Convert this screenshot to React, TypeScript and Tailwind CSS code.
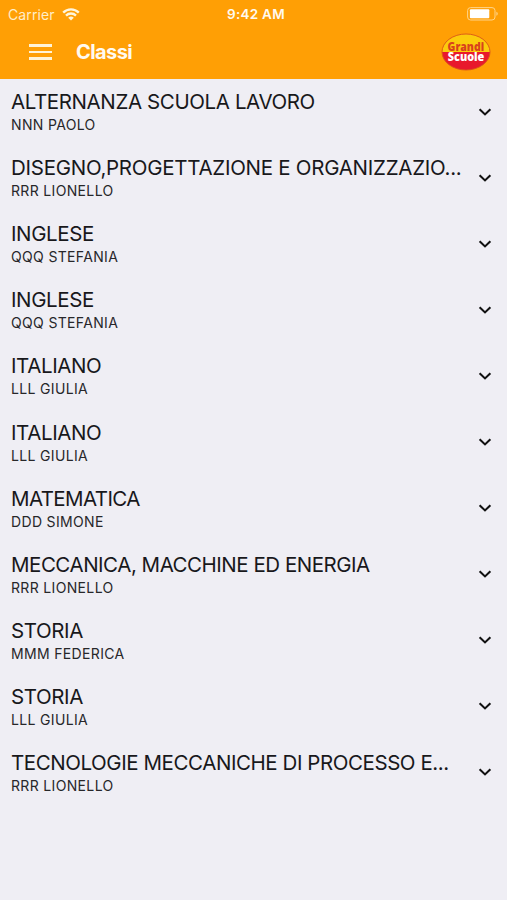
import { useState } from "react";
import clsx from "clsx";

interface Lesson {
  id: number;
  subject: string;
  teacher: string;
  tracking?: string;
}

const lessons: Lesson[] = [
  { id: 1, subject: "ALTERNANZA SCUOLA LAVORO", teacher: "NNN PAOLO" },
  {
    id: 2,
    subject: "DISEGNO,PROGETTAZIONE E ORGANIZZAZIO...",
    teacher: "RRR LIONELLO",
    tracking: "tracking-[-0.27px]",
  },
  { id: 3, subject: "INGLESE", teacher: "QQQ STEFANIA" },
  { id: 4, subject: "INGLESE", teacher: "QQQ STEFANIA" },
  { id: 5, subject: "ITALIANO", teacher: "LLL GIULIA" },
  { id: 6, subject: "ITALIANO", teacher: "LLL GIULIA" },
  { id: 7, subject: "MATEMATICA", teacher: "DDD SIMONE", tracking: "tracking-[-0.6px]" },
  {
    id: 8,
    subject: "MECCANICA, MACCHINE ED ENERGIA",
    teacher: "RRR LIONELLO",
    tracking: "tracking-[-0.48px]",
  },
  { id: 9, subject: "STORIA", teacher: "MMM FEDERICA" },
  { id: 10, subject: "STORIA", teacher: "LLL GIULIA" },
  {
    id: 11,
    subject: "TECNOLOGIE MECCANICHE DI PROCESSO E...",
    teacher: "RRR LIONELLO",
    tracking: "tracking-[-0.43px]",
  },
];

const WifiIcon = () => (
  <svg width="18" height="13" viewBox="0 0 18 13" fill="none" stroke="#fff6dc" strokeWidth="2.3">
    <path d="M1.2 4.6a11 11 0 0 1 15.6 0" />
    <path d="M4 7.6a7 7 0 0 1 10 0" />
    <path d="M6.2 9.8a4 4 0 0 1 5.6 0L9 12.6z" fill="#fff6dc" stroke="none" />
  </svg>
);

const BatteryIcon = () => (
  <svg width="32" height="14" viewBox="0 0 32 14">
    <rect x="0.6" y="0.6" width="27.4" height="12.4" rx="3" fill="none" stroke="#ffd48a" strokeWidth="1" />
    <rect x="2.9" y="2.3" width="19.4" height="9" rx="1" fill="#fff" />
    <path d="M29.4 4.8c1.8.6 1.8 3.4 0 4z" fill="#ffd48a" />
  </svg>
);

const Logo = () => (
  <svg width="50" height="38" viewBox="0 0 50 38">
    <defs>
      <clipPath id="lower-half">
        <rect x="0" y="19" width="50" height="19" />
      </clipPath>
    </defs>
    <ellipse cx="25" cy="19" rx="24" ry="18" fill="#fccb0c" />
    <ellipse cx="25" cy="19" rx="24" ry="18" fill="#e8192c" clipPath="url(#lower-half)" />
    <ellipse cx="25" cy="19" rx="24" ry="18" fill="none" stroke="#d9541a" strokeWidth="0.9" />
    <g fontFamily="'Open Sans', sans-serif" fontWeight="800" fontSize="11.6">
      <text x="6.6" y="18.4" fill="#d8421c" textLength="36.5" lengthAdjust="spacingAndGlyphs">
        Grandi
      </text>
      <text x="6.8" y="28.4" fill="#fff" textLength="36.5" lengthAdjust="spacingAndGlyphs">
        Scuole
      </text>
    </g>
  </svg>
);

const Header = () => (
  <header className="h-[79px] bg-[#ff9f05] text-[#fffaf0]">
    {/* Status bar */}
    <div className="grid h-7 grid-cols-3 items-center px-2 text-[14px]">
      <div className="flex items-center gap-[7px] text-[#ffedc8]">
        <span className="tracking-[0.1px]">Carrier</span>
        <WifiIcon />
      </div>
      <span className="pl-[5px] text-center text-[13.5px] font-semibold tracking-[0.25px]">9:42 AM</span>
      <div className="flex justify-end pb-px">
        <BatteryIcon />
      </div>
    </div>

    {/* Navigation */}
    <div className="flex h-12 items-center pl-[28.5px] pr-4">
      <button aria-label="Menu" className="flex flex-col gap-1">
        <span className="h-[2.6px] w-[23px] bg-[#fff3d6]" />
        <span className="h-[2.6px] w-[23px] bg-[#fff3d6]" />
        <span className="h-[2.6px] w-[23px] bg-[#fff3d6]" />
      </button>
      <h1 className="ml-[24.5px] flex-1 text-[20px] font-bold tracking-[-0.03em]">Classi</h1>
      <Logo />
    </div>
  </header>
);

const LessonRow = ({ lesson }: { lesson: Lesson }) => {
  const [open, setOpen] = useState(false);

  return (
    <li>
      <button
        onClick={() => setOpen(!open)}
        aria-expanded={open}
        className="flex h-[66.1px] w-full items-center justify-between pl-[11px] pr-[15px] text-left"
      >
        <div className="whitespace-nowrap text-[#18181b]">
          <p className={clsx("text-[20.5px] leading-[26px]", lesson.tracking ?? "tracking-[-0.39px]")}>
            {lesson.subject}
          </p>
          <p className="text-[14px] leading-5 tracking-[0.34px] text-[#27272a]">{lesson.teacher}</p>
        </div>
        <svg
          className={clsx("mb-px", open && "rotate-180")}
          width="14"
          height="10"
          viewBox="0 0 14 10"
          fill="none"
          stroke="#111"
          strokeWidth="2.1"
        >
          <path d="M1.6 2.2 7 7.4l5.4-5.2" />
        </svg>
      </button>
    </li>
  );
};

const App = () => {
  return (
    <div className="min-h-screen bg-[#efeef4] font-['Inter',sans-serif]">
      <Header />
      <ul>
        {lessons.map((lesson) => (
          <LessonRow key={lesson.id} lesson={lesson} />
        ))}
      </ul>
    </div>
  );
};

export default App;
